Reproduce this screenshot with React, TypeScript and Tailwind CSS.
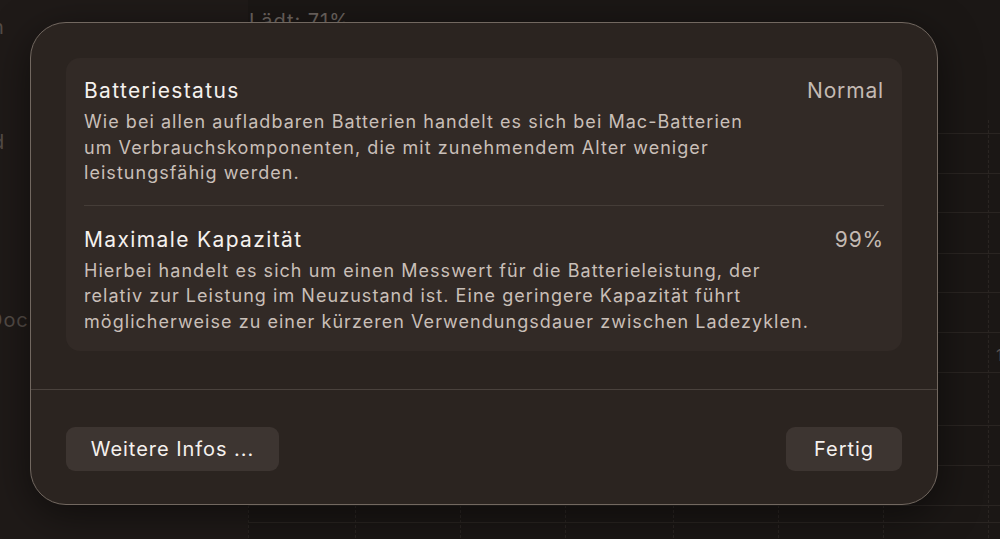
import { Fragment } from 'react'

const ROWS = [
  {
    title: 'Batteriestatus',
    value: 'Normal',
    lines: [
      'Wie bei allen aufladbaren Batterien handelt es sich bei Mac-Batterien',
      'um Verbrauchskomponenten, die mit zunehmendem Alter weniger',
      'leistungsfähig werden.',
    ],
  },
  {
    title: 'Maximale Kapazität',
    value: '99%',
    lines: [
      'Hierbei handelt es sich um einen Messwert für die Batterieleistung, der',
      'relativ zur Leistung im Neuzustand ist. Eine geringere Kapazität führt',
      'möglicherweise zu einer kürzeren Verwendungsdauer zwischen Ladezyklen.',
    ],
  },
]

// faint chart grid behind the sheet
function ChartGrid() {
  const hLines = [133, 173, 212, 253, 292, 332, 372, 425, 465, 505, 522]
  const vLines = [0, 107, 212, 317, 425, 530, 635, 740]
  return (
    <svg className="absolute inset-0" width="753" height="539">
      {hLines.map(y => (
        <line key={y} x1="0" x2="753" y1={y + 0.5} y2={y + 0.5} stroke="#2a2522" strokeWidth="1" />
      ))}
      {vLines.map(x => (
        <line key={x} x1={x + 0.5} x2={x + 0.5} y1="120" y2="539" stroke="#2a2522" strokeWidth="1" strokeDasharray="3 2" />
      ))}
    </svg>
  )
}

export default function App() {
  return (
    <div
      className="relative w-[1000px] h-[539px] overflow-hidden bg-[#1c1816] text-[#f3efec] tracking-[0.06em]"
      style={{ fontFamily: 'Inter, "Open Sans", sans-serif' }}
    >
      {/* dimmed window underneath */}
      <div className="flex h-full">
        <div className="w-[248px] bg-[#1f1a18] text-[#544c47] text-[20px] relative">
          <div className="absolute left-[-8px] top-[12px]">n</div>
          <div className="absolute left-[-8px] top-[127px]">d</div>
          <div className="absolute left-[-12px] top-[305px]">Doc</div>
        </div>
        <div className="relative flex-1 bg-[#1b1715]">
          <div className="pt-[11px] pl-[1px] text-[20px] leading-[20px] text-[#6d6560]">Lädt: 71%</div>
          <ChartGrid />
          <div className="absolute left-[748px] top-[343px] text-[16px] text-[#5a524d]">1</div>
        </div>
      </div>

      {/* battery health sheet */}
      <div className="absolute left-[30px] top-[22px] w-[908px] h-[483px] rounded-[36px] border border-[#726860] bg-[#2b2420] shadow-[0_10px_40px_rgba(0,0,0,0.5)] flex flex-col">
        <div className="px-[35px] pt-[35px]">
          <div className="rounded-[14px] bg-[#322a26] px-[18px] pt-[21px] pb-[17px]">
            {ROWS.map((row, i) => (
              <Fragment key={row.title}>
                {i > 0 && <div className="h-px bg-[#453d38] mt-[19px] mb-[22px]" />}
                <div className="flex justify-between items-start">
                  <div>
                    <div className="text-[21px] leading-[24px] text-[#f5f1ee] tracking-[0.065em]">{row.title}</div>
                    <div className="mt-[6px] text-[18px] leading-[25.5px] text-[#c9bfb8] tracking-[0.058em]">
                      {row.lines.map((l, j) => (
                        <div key={j}>{l}</div>
                      ))}
                    </div>
                  </div>
                  <div className="text-[21px] leading-[24px] text-[#c4bab3] tracking-[0.04em]">{row.value}</div>
                </div>
              </Fragment>
            ))}
          </div>
        </div>
        <div className="h-px bg-[#4a423d] mt-[38px]" />
        <div className="flex justify-between px-[35px] mt-[37px]">
          <button className="w-[213px] h-[44px] rounded-[9px] bg-[#3d3531] text-[20px] text-[#f5f1ee]">Weitere Infos ...</button>
          <button className="w-[116px] h-[44px] rounded-[9px] bg-[#3d3531] text-[20px] text-[#f5f1ee]">Fertig</button>
        </div>
      </div>
    </div>
  )
}
